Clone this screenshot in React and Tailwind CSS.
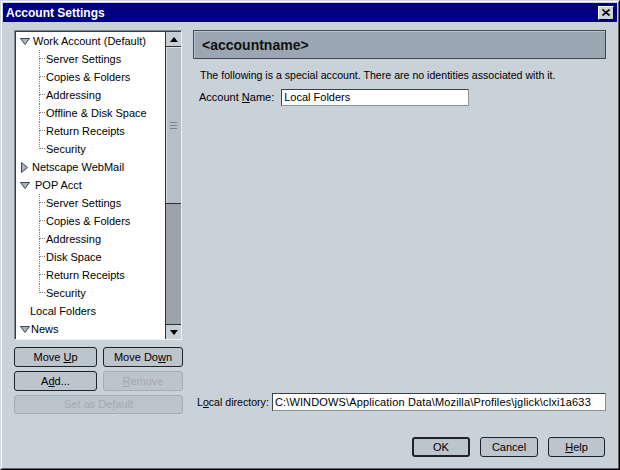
import React from 'react';

const workChildren = ['Server Settings', 'Copies & Folders', 'Addressing', 'Offline & Disk Space', 'Return Receipts', 'Security'];
const popChildren = ['Server Settings', 'Copies & Folders', 'Addressing', 'Disk Space', 'Return Receipts', 'Security'];

function DownTwisty() {
  return (
    <svg width="10" height="7" viewBox="0 0 10 7" className="shrink-0">
      <polygon points="0.5,0.5 9.5,0.5 5,6.5" fill="#a9b4bf" stroke="#3d4751" strokeWidth="1" />
    </svg>
  );
}

function RightTwisty() {
  return (
    <svg width="7" height="11" viewBox="0 0 7 11" className="shrink-0">
      <polygon points="0.5,0.5 6.5,5.5 0.5,10.5" fill="#a9b4bf" stroke="#3d4751" strokeWidth="1" />
    </svg>
  );
}

function ParentRow({ label, twisty, pad, gap }) {
  return (
    <div className={`flex h-[18px] items-center ${pad}`}>
      {twisty === 'down' && <DownTwisty />}
      {twisty === 'right' && <RightTwisty />}
      <span className={gap}>{label}</span>
    </div>
  );
}

function ChildRow({ label, last }) {
  return (
    <div className="flex h-[18px] items-center pl-[23px]">
      <div className="flex h-full w-[6px] flex-col">
        <div className="h-[9px] border-b border-l border-dotted border-[#7d858d]" />
        {!last && <div className="h-[9px] border-l border-dotted border-[#7d858d]" />}
      </div>
      <span className="ml-[1px]">{label}</span>
    </div>
  );
}

function Btn({ children, disabled, def, className }) {
  const border = disabled
    ? 'border border-[#a4acb4] text-[#a3abb3]'
    : def
    ? 'border-2 border-[#1f2327] text-black'
    : 'border border-[#1f2327] text-black';
  return (
    <div className={`flex shrink-0 items-center justify-center rounded-[3px] bg-[#bcc4cc] text-[11px] leading-none ${border} ${className}`}>
      <span>{children}</span>
    </div>
  );
}

function Scrollbar() {
  return (
    <div className="flex h-full w-[16px] flex-col border-l border-[#2d3238]">
      <div className="flex h-[15px] items-center justify-center border-b border-[#2d3238] bg-[#c6ced6]">
        <svg width="8" height="5" viewBox="0 0 8 5"><polygon points="0,5 8,5 4,0" fill="#000" /></svg>
      </div>
      <div className="flex h-[157px] flex-col items-center justify-center gap-[2px] border-b border-[#2d3238] bg-[#b6bec6] shadow-[inset_1px_1px_0_#d8dee4]">
        <div className="h-px w-[7px] bg-[#7c848c]" />
        <div className="h-px w-[7px] bg-[#7c848c]" />
        <div className="h-px w-[7px] bg-[#7c848c]" />
      </div>
      <div className="flex-1 bg-[#9da3ab]" />
      <div className="flex h-[15px] items-center justify-center border-t border-[#2d3238] bg-[#c6ced6]">
        <svg width="8" height="5" viewBox="0 0 8 5"><polygon points="0,0 8,0 4,5" fill="#000" /></svg>
      </div>
    </div>
  );
}

function Tree() {
  return (
    <div className="h-[310px] w-[168px] shrink-0 border border-b-[#eef1f4] border-l-[#7e868e] border-r-[#eef1f4] border-t-[#7e868e]">
      <div className="flex h-full border-l border-t border-[#3a4047] bg-white">
        <div className="flex-1 overflow-hidden text-[11px] leading-[13px] text-black">
          <ParentRow label="Work Account (Default)" twisty="down" pad="pl-[4px]" gap="ml-[3px]" />
          {workChildren.map((c, i) => (
            <ChildRow key={'w' + i} label={c} last={i === workChildren.length - 1} />
          ))}
          <ParentRow label="Netscape WebMail" twisty="right" pad="pl-[5px]" gap="ml-[4px]" />
          <ParentRow label="POP Acct" twisty="down" pad="pl-[4px]" gap="ml-[5px]" />
          {popChildren.map((c, i) => (
            <ChildRow key={'p' + i} label={c} last={i === popChildren.length - 1} />
          ))}
          <ParentRow label="Local Folders" pad="pl-[14px]" />
          <ParentRow label="News" twisty="down" pad="pl-[4px]" gap="ml-[1px]" />
        </div>
        <Scrollbar />
      </div>
    </div>
  );
}

export default function App() {
  return (
    <div className="flex h-[470px] w-[620px] flex-col border border-b-black border-l-[#d2d7dc] border-r-black border-t-[#d2d7dc] font-['Liberation_Sans',Arial,sans-serif]">
      <div className="flex flex-1 flex-col border border-b-[#5e646a] border-l-white border-r-[#5e646a] border-t-white bg-[#c9d1d9] p-px">
        {/* title bar */}
        <div className="flex h-[19px] shrink-0 items-center justify-between bg-[#000080] pl-[3px] pr-[3px]">
          <span className="text-[12px] font-bold leading-none text-white">Account Settings</span>
          <div className="flex h-[14px] w-[16px] items-center justify-center border border-b-black border-l-white border-r-black border-t-white bg-[#c9d1d9]">
            <svg width="8" height="7" viewBox="0 0 8 7">
              <path d="M0.5 0.5 L7.5 6.5 M7.5 0.5 L0.5 6.5" stroke="#000" strokeWidth="1.6" />
            </svg>
          </div>
        </div>

        {/* body */}
        <div className="flex h-[392px] shrink-0 gap-[10px] pl-[11px] pt-[8px]">
          <div className="flex w-[169px] flex-col">
            <Tree />
            <div className="mt-[7px] flex gap-[6px]">
              <Btn className="h-[20px] w-[83px]">Move <span className="underline">U</span>p</Btn>
              <Btn className="h-[20px] w-[80px]">Move Do<span className="underline">w</span>n</Btn>
            </div>
            <div className="mt-[4px] flex gap-[6px]">
              <Btn className="h-[20px] w-[83px]">A<span className="underline">d</span>d...</Btn>
              <Btn disabled className="h-[20px] w-[80px]"><span className="underline">R</span>emove</Btn>
            </div>
            <Btn disabled className="mt-[4px] h-[19px] w-[169px]">Set as De<span className="underline">f</span>ault</Btn>
          </div>

          <div className="flex w-[413px] flex-col text-[11px] leading-[13px] text-black">
            <div className="flex h-[29px] shrink-0 items-center border border-[#3f474f] bg-[#9aa6b2] pl-[8px] shadow-[inset_1px_1px_0_#bcc5ce]">
              <span className="text-[14px] font-bold leading-none text-[#111]">&lt;accountname&gt;</span>
            </div>
            <div className="mt-[10px] pl-[7px] text-[10.6px]">The following is a special account. There are no identities associated with it.</div>
            <div className="mt-[7px] flex items-center pl-[6px]">
              <span>Account <span className="underline">N</span>ame:</span>
              <div className="ml-[7px] flex h-[17px] w-[188px] items-center border border-[#8a9299] border-l-[#3a4148] border-t-[#3a4148] bg-white pl-[2px]">
                Local Folders
              </div>
            </div>
            <div className="flex-1" />
            <div className="mb-[3px] flex items-center pl-[4px]">
              <span className="text-[10.6px]">L<span className="underline">o</span>cal directory:</span>
              <div className="ml-[3px] flex h-[18px] flex-1 items-center border border-[#8a9299] border-l-[#3a4148] border-t-[#3a4148] bg-white pl-[2px] tracking-[0.15px]">
                C:\WINDOWS\Application Data\Mozilla\Profiles\jglick\clxi1a633
              </div>
            </div>
          </div>
        </div>

        {/* dialog buttons */}
        <div className="mt-[23px] flex justify-end gap-[10px] pr-[12px]">
          <Btn def className="h-[20px] w-[58px]">OK</Btn>
          <Btn className="h-[20px] w-[58px]">Cancel</Btn>
          <Btn className="h-[20px] w-[57px]"><span className="underline">H</span>elp</Btn>
        </div>
      </div>
    </div>
  );
}
